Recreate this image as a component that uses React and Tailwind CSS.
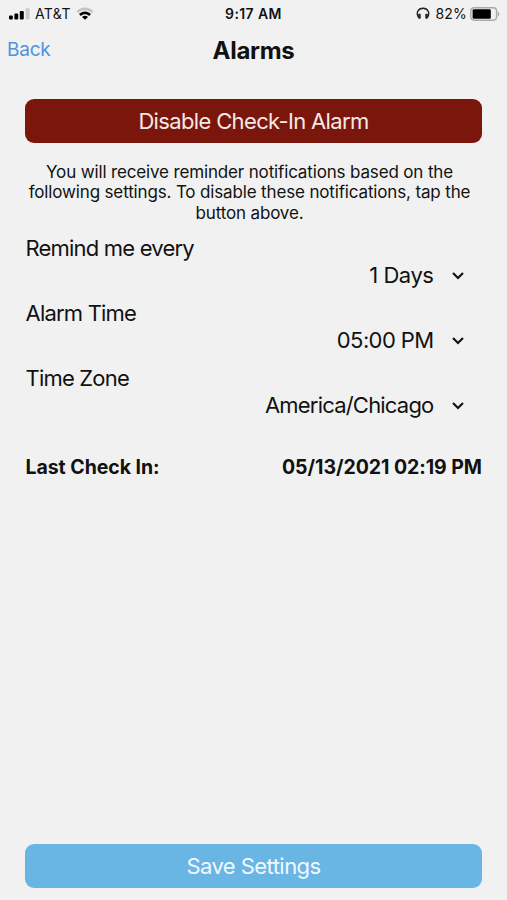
const SignalIcon = () => (
  <svg viewBox="0 0 22 12" className="h-[12px] w-[22px]" aria-hidden="true">
    <rect x="0" y="7.4" width="3.8" height="4.2" rx="1" />
    <rect x="5.4" y="5.6" width="3.8" height="6" rx="1" />
    <rect x="10.8" y="3" width="4" height="8.6" rx="1" />
    <rect x="16.6" y="0.2" width="4" height="11.4" rx="1" fill="#cacaca" />
  </svg>
);

const WifiIcon = () => (
  <svg viewBox="0 0 18 13" className="h-[13px] w-[18px]" aria-hidden="true">
    <path d="M0.5 4.2C5.2-0.6 12.8-0.6 17.5 4.2L15.8 6C12 2.3 6 2.3 2.2 6z" fill="#c4c4c4" />
    <path d="M3 7.1C6.4 3.6 11.6 3.6 15 7.1L13.1 8.9C10.8 6.6 7.2 6.6 4.9 8.9z" />
    <path d="M6 10C7.7 8.4 10.3 8.4 12 10L9 12.8z" />
  </svg>
);

const HeadphonesIcon = () => (
  <svg viewBox="0 0 14 13" className="h-[13px] w-[14px]" aria-hidden="true">
    <path d="M2.7 10.6C-0.4 6.2 2 1.3 7 1.3s7.4 4.9 4.3 9.3" fill="none" stroke="#222" strokeWidth="1.4" />
    <rect x="2.2" y="6.8" width="2.5" height="5" rx="0.8" fill="#222" />
    <rect x="9.3" y="6.8" width="2.5" height="5" rx="0.8" fill="#222" />
  </svg>
);

const BatteryIcon = () => (
  <svg viewBox="0 0 30 14" className="h-[14px] w-[30px]" aria-hidden="true">
    <rect x="0.8" y="0.8" width="25.8" height="12.4" rx="3.4" fill="none" stroke="#a9a9a9" strokeWidth="1.4" />
    <rect x="2.6" y="2.2" width="18.2" height="9.6" rx="1.4" />
    <path d="M27.8 4.6c2 .7 2 4.1 0 4.8z" fill="#a9a9a9" />
  </svg>
);

const Chevron = () => (
  <svg viewBox="0 0 14 10" className="mt-px h-[10px] w-[14px]" aria-hidden="true">
    <path d="M2 2l5 5 5-5" fill="none" stroke="#111" strokeWidth="2.1" />
  </svg>
);

const settings = [
  { label: "Remind me every", value: "1 Days", tracking: "tracking-[-0.45px]" },
  { label: "Alarm Time", value: "05:00 PM", tracking: "tracking-[-0.6px]" },
  { label: "Time Zone", value: "America/Chicago", tracking: "tracking-[-0.8px]" },
];

export default function App() {
  return (
    <div className="flex h-[900px] w-[507px] flex-col bg-[#f1f1f1] font-['Inter',sans-serif] text-[#111]">
      {/* Status bar */}
      <div className="grid h-[27px] grid-cols-3 items-center px-[7px] text-[14px]">
        <div className="flex items-center gap-[4px] pl-[2px]">
          <SignalIcon />
          <span className="tracking-[0.4px]">AT&amp;T</span>
          <span className="pl-px">
            <WifiIcon />
          </span>
        </div>
        <span className="text-center font-semibold tracking-[0.4px]">9:17 AM</span>
        <div className="flex items-center justify-end gap-[5px]">
          <HeadphonesIcon />
          <span className="tracking-[0.2px]">82%</span>
          <span className="-ml-[2px]">
            <BatteryIcon />
          </span>
        </div>
      </div>

      {/* Title bar */}
      <header className="grid h-[46px] grid-cols-3 items-center px-[7px] pt-px">
        <button className="text-left text-[19px] tracking-[-0.2px] text-[#4f93dd]">Back</button>
        <h1 className="text-center text-[24px] font-bold tracking-[-0.3px]">Alarms</h1>
      </header>

      <main className="flex flex-1 flex-col px-[25px] pt-[25.5px] pb-[12.5px]">
        <button className="h-[44px] shrink-0 rounded-[9px] bg-[#7b160d] pt-px text-[22px] tracking-[-0.65px] text-[#f3e9e8]">
          Disable Check-In Alarm
        </button>

        <p className="mt-[19px] pr-[8px] text-center text-[17px] leading-[20.5px] tracking-[-0.15px]">
          You will receive reminder notifications based on the
          <br />
          following settings. To disable these notifications, tap the
          <br />
          button above.
        </p>

        <div className="mt-[11.5px] pl-[0.5px] text-[22px] leading-[27px] tracking-[-0.8px]">
          {settings.map((s) => (
            <div key={s.label} className="h-[65px]">
              <div>{s.label}</div>
              <button className="flex w-full items-center justify-end gap-[17px] pr-[17.5px]">
                <span className={s.tracking}>{s.value}</span>
                <Chevron />
              </button>
            </div>
          ))}
        </div>

        <div className="mt-[24.5px] flex justify-between pl-[0.5px] text-[19.5px] font-bold leading-[26px] tracking-[-0.05px]">
          <span>Last Check In:</span>
          <span>05/13/2021 02:19 PM</span>
        </div>

        <button className="mt-auto h-[44px] shrink-0 rounded-[9px] bg-[#69b6e5] pt-px text-[22px] tracking-[-0.55px] text-[#f1f8fd]">
          Save Settings
        </button>
      </main>
    </div>
  );
}
